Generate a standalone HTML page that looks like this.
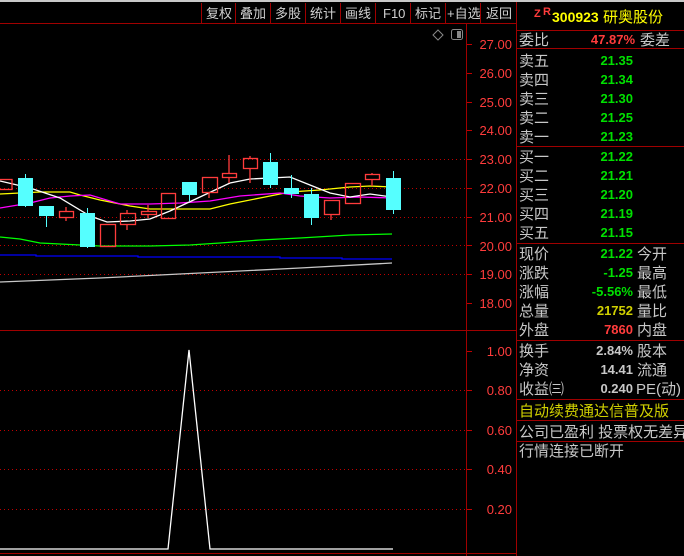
<!DOCTYPE html>
<html><head><meta charset="utf-8"><style>
body{margin:0;background:#000;width:684px;height:556px;overflow:hidden;font-family:"Liberation Sans","Noto Sans CJK SC",sans-serif}
svg{position:absolute;left:0;top:0}
</style></head><body>
<svg width="684" height="556" viewBox="0 0 684 556" xmlns="http://www.w3.org/2000/svg" font-family="Liberation Sans, Noto Sans CJK SC, sans-serif">
<rect x="0" y="0" width="684" height="556" fill="#000"/>
<rect x="0" y="0" width="684" height="2" fill="#c8c8c8"/>
<g stroke="#a00000" stroke-width="1">
<line x1="0" y1="23.5" x2="517" y2="23.5"/>
<line x1="201.5" y1="3" x2="201.5" y2="23"/><line x1="235.5" y1="3" x2="235.5" y2="23"/><line x1="270.5" y1="3" x2="270.5" y2="23"/><line x1="305.5" y1="3" x2="305.5" y2="23"/><line x1="340.5" y1="3" x2="340.5" y2="23"/><line x1="375.5" y1="3" x2="375.5" y2="23"/><line x1="410.5" y1="3" x2="410.5" y2="23"/><line x1="445.5" y1="3" x2="445.5" y2="23"/><line x1="480.5" y1="3" x2="480.5" y2="23"/>
<line x1="466.5" y1="23" x2="466.5" y2="556"/>
<line x1="516.5" y1="2" x2="516.5" y2="556"/>
<line x1="0" y1="330.5" x2="517" y2="330.5"/>
<line x1="0" y1="553.5" x2="517" y2="553.5"/>
</g>
<g fill="#d0d0d0" font-size="13">
<text x="206" y="18">复权</text><text x="240" y="18">叠加</text><text x="275" y="18">多股</text><text x="310" y="18">统计</text><text x="345" y="18">画线</text><text x="383" y="18">F10</text><text x="415" y="18">标记</text><text x="447" y="18">+自选</text><text x="486" y="18">返回</text>
</g>
<path d="M438 30 L443 35 L438 40 L433 35 Z" fill="none" stroke="#888"/>
<rect x="451.5" y="29.5" width="11" height="10" rx="2" fill="none" stroke="#888"/><rect x="457" y="31" width="4" height="7" fill="#888"/>
<g stroke="#c00000" stroke-dasharray="1,3">
<line x1="0" y1="159.5" x2="466" y2="159.5"/><line x1="0" y1="188.5" x2="466" y2="188.5"/><line x1="0" y1="217.5" x2="466" y2="217.5"/><line x1="0" y1="245.5" x2="466" y2="245.5"/><line x1="0" y1="274.5" x2="466" y2="274.5"/>
<line x1="0" y1="390.5" x2="466" y2="390.5"/><line x1="0" y1="430.5" x2="466" y2="430.5"/><line x1="0" y1="469.5" x2="466" y2="469.5"/><line x1="0" y1="509.5" x2="466" y2="509.5"/>
</g>
<g fill="#ff3c3c" font-size="13" text-anchor="end">
<text x="512" y="49">27.00</text><text x="512" y="78">26.00</text><text x="512" y="107">25.00</text><text x="512" y="135">24.00</text><text x="512" y="164">23.00</text><text x="512" y="193">22.00</text><text x="512" y="222">21.00</text><text x="512" y="251">20.00</text><text x="512" y="279">19.00</text><text x="512" y="308">18.00</text>
<text x="512" y="356">1.00</text><text x="512" y="395">0.80</text><text x="512" y="435">0.60</text><text x="512" y="474">0.40</text><text x="512" y="514">0.20</text>
</g>
<g stroke="#c00000"><path d="M467 44.5h5M467 73.5h5M467 102.5h5M467 130.5h5M467 159.5h5M467 188.5h5M467 217.5h5M467 245.5h5M467 274.5h5M467 303.5h5M467 351.5h5M467 390.5h5M467 430.5h5M467 469.5h5M467 509.5h5"/></g>
<polyline fill="none" stroke="#00ff00" stroke-width="1.3" points="0,237 20,239 40,243 60,244 100,246 150,246 190,245 220,243 260,240 300,238 350,235 392,234"/>
<polyline fill="none" stroke="#0000ff" stroke-width="1.3" points="0,255 36,255 36,256 138,256 138,257 280,257 280,258 342,258 342,259 392,259"/>
<polyline fill="none" stroke="#c8c8c8" stroke-width="1.3" points="0,282 100,278 200,273 300,268 392,263"/>
<polyline fill="none" stroke="#ffff00" stroke-width="1.3" points="0,194 40,192 70,192 80,195 100,200 130,206 150,209 210,209 230,204 260,198 290,192 320,190 350,187 370,186 392,187"/>
<polyline fill="none" stroke="#ff00ff" stroke-width="1.3" points="0,208 30,203 50,198 70,196 90,195 120,204 150,204 180,203 210,201 240,196 280,193 300,196 330,198 360,197 392,198"/>
<polyline fill="none" stroke="#ffffff" stroke-width="1.3" points="0,181 30,188 60,198 90,216 107,222 130,221 150,219 170,211 200,197 230,183 250,179 290,177 310,185 330,193 350,197 370,194 392,197"/>
<g stroke="#ff3c3c" fill="none" stroke-width="1.3">
<rect x="-2" y="179.5" width="14" height="10"/>
<path d="M66 207v4M66 217v4"/><rect x="59.5" y="211.5" width="14" height="6"/>
<rect x="100.5" y="224.5" width="15" height="22"/>
<path d="M127 210v3M127 224v6"/><rect x="120.5" y="213.5" width="15" height="11"/>
<path d="M148 205v6M148 214v4"/><rect x="141.5" y="211.5" width="15" height="3"/>
<rect x="161.5" y="193.5" width="14" height="25"/>
<path d="M209 192v6"/><rect x="202.5" y="177.5" width="15" height="15"/>
<path d="M229 155v18M229 177v6"/><rect x="222.5" y="173.5" width="14" height="4"/>
<path d="M250 156v2M250 168v15"/><rect x="243.5" y="158.5" width="14" height="10"/>
<path d="M331 214v6"/><rect x="324.5" y="200.5" width="15" height="14"/>
<rect x="345.5" y="183.5" width="15" height="20"/>
<path d="M372 173v1M372 179v7"/><rect x="365.5" y="174.5" width="14" height="5"/>
</g>
<g fill="#55ffff" stroke="#55ffff">
<path d="M25.5 174v33M46.5 206v21M87.5 208v40M189.5 182v19M270.5 153v35M291.5 175v23M311.5 188v37M393.5 171v43" stroke-width="1"/>
<rect x="18" y="178" width="15" height="28" stroke="none"/>
<rect x="39" y="206" width="15" height="10" stroke="none"/>
<rect x="80" y="213" width="15" height="34" stroke="none"/>
<rect x="182" y="182" width="15" height="13" stroke="none"/>
<rect x="263" y="162" width="15" height="23" stroke="none"/>
<rect x="284" y="188" width="15" height="6" stroke="none"/>
<rect x="304" y="194" width="15" height="24" stroke="none"/>
<rect x="386" y="178" width="15" height="32" stroke="none"/>
</g>
<polyline fill="none" stroke="#fff" stroke-width="1.3" points="0,549 168,549 189,350 210,549 393,549"/>
<g stroke="#a00000"><path d="M517 30.5h167M517 48.5h167M517 146.5h167M517 243.5h167M517 340.5h167M517 399.5h167M517 420.5h167M517 441.5h167"/></g>
<text x="534" y="17" fill="#ff3c3c" font-size="11" font-weight="bold">Z</text><text x="543" y="15" fill="#ff3c3c" font-size="11" font-weight="bold">R</text>
<text x="552" y="22" fill="#ffff00" font-size="14" font-weight="bold">300923</text>
<text x="603" y="22" fill="#ffff00" font-size="15">研奥股份</text>
<g fill="#c8c8c8" font-size="15">
<text x="519" y="45">委比</text><text x="640" y="45">委差</text>
<text x="519" y="66">卖五</text><text x="519" y="85">卖四</text><text x="519" y="104">卖三</text><text x="519" y="123">卖二</text><text x="519" y="142">卖一</text>
<text x="519" y="162">买一</text><text x="519" y="181">买二</text><text x="519" y="200">买三</text><text x="519" y="219">买四</text><text x="519" y="238">买五</text>
<text x="519" y="259">现价</text><text x="519" y="278">涨跌</text><text x="519" y="297">涨幅</text><text x="519" y="316">总量</text><text x="519" y="335">外盘</text>
<text x="637" y="259">今开</text><text x="637" y="278">最高</text><text x="637" y="297">最低</text><text x="637" y="316">量比</text><text x="637" y="335">内盘</text>
<text x="519" y="356">换手</text><text x="519" y="375">净资</text><text x="519" y="394">收益㈢</text>
<text x="637" y="356">股本</text><text x="637" y="375">流通</text><text x="636" y="394">PE(动)</text>
<text x="519" y="437">公司已盈利 投票权无差异</text>
<text x="519" y="456">行情连接已断开</text>
</g>
<text x="519" y="416" fill="#d0d000" font-size="15">自动续费通达信普及版</text>
<g font-size="13" font-weight="bold" text-anchor="end">
<text x="635" y="44" fill="#ff3c3c">47.87%</text>
<g fill="#00e000"><text x="633" y="65">21.35</text><text x="633" y="84">21.34</text><text x="633" y="103">21.30</text><text x="633" y="122">21.25</text><text x="633" y="141">21.23</text>
<text x="633" y="161">21.22</text><text x="633" y="180">21.21</text><text x="633" y="199">21.20</text><text x="633" y="218">21.19</text><text x="633" y="237">21.15</text>
<text x="633" y="258">21.22</text><text x="633" y="277">-1.25</text><text x="633" y="296">-5.56%</text></g>
<text x="633" y="315" fill="#d0d000">21752</text><text x="633" y="334" fill="#ff3c3c">7860</text>
<g fill="#c8c8c8"><text x="633" y="355">2.84%</text><text x="633" y="374">14.41</text><text x="633" y="393">0.240</text></g>
</g>
</svg>
</body></html>
